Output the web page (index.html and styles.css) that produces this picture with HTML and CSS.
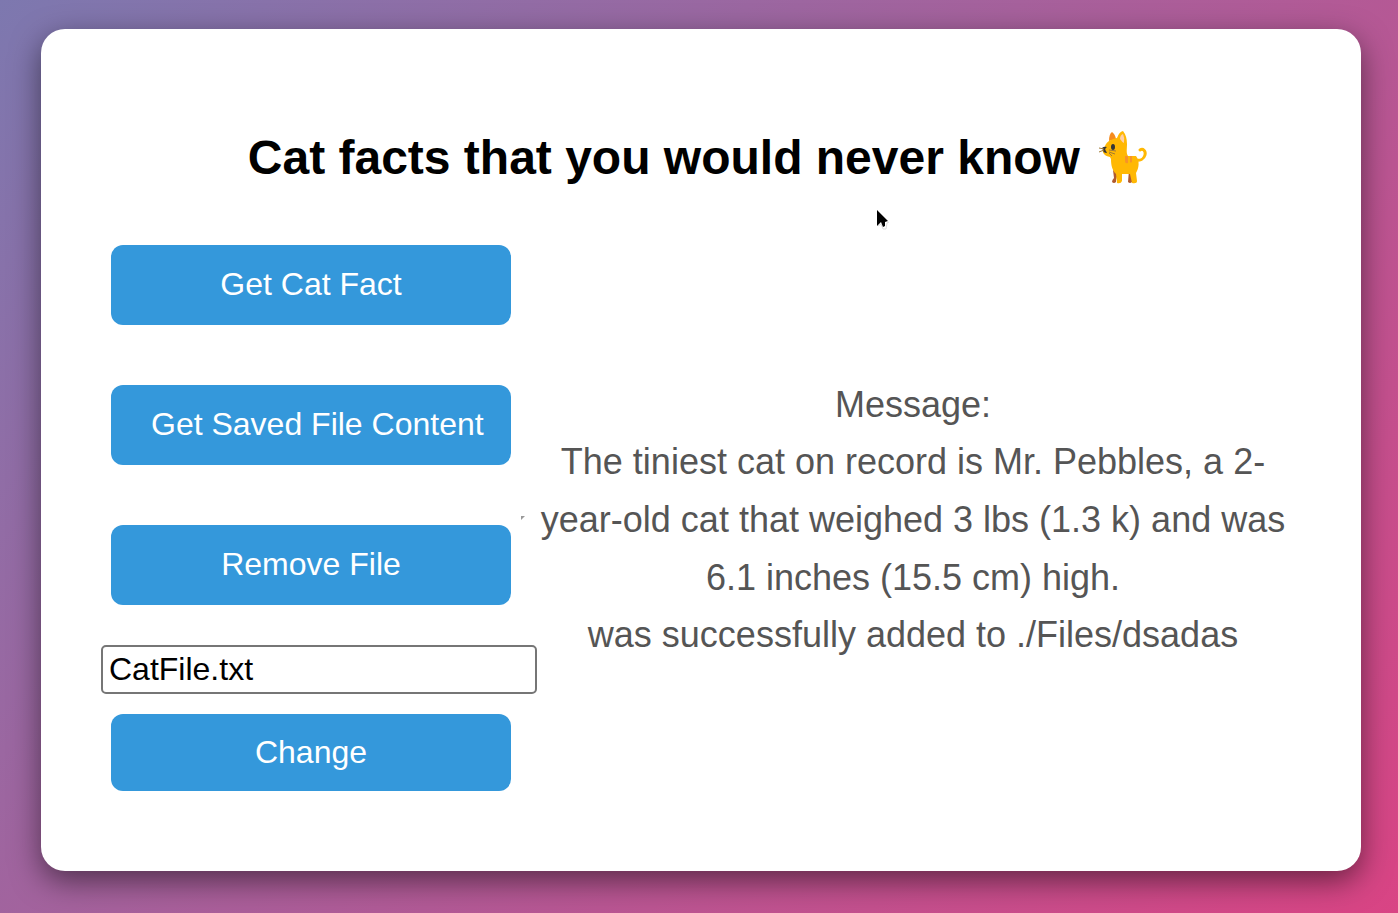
FILE: index.html
```html
<!DOCTYPE html>
<html lang="en">
<head>
<meta charset="utf-8">
<meta name="viewport" content="width=device-width, initial-scale=1">
<title>Cat facts</title>
<link rel="stylesheet" href="styles.css">
</head>
<body>
<main class="card">
  <h1 class="title">Cat facts that you would never know
    <svg class="cat" viewBox="0 0 70 75" role="img" aria-label="Cat">
      <path d="M46 40C51 41 55 39 56 35C57 31 54 28 51 30" fill="none" stroke="#ffb804" stroke-width="3" stroke-linecap="round"/>
      <path d="M24 50L29 53L27 60V62Q25 64 23 62Q23 60 25 58ZM40 50L43 54V62Q41 64 39 62Z" fill="#b05a2e"/>
      <path d="M20 21Q20 14 23 12Q26 14 27 19Z" fill="#f58b1e"/>
      <path d="M16 26C18 21 23 19 28 18Q30 12 34 11Q38 16 38 24C38 29 37 33 39 36L47 36C51 41 50 48 47 53L48 61Q48 64 43 63L41 54L33 54L33 61Q32 64 28 63L27 54C23 50 22 45 22 39L21 37C16 36 13 33 14 30Z" fill="#ffb804"/>
      <path d="M31 19Q31 15 34 14Q36 18 35 23Q33 22 31 19Z" fill="#ffcfa8"/>
      <path d="M36 36H39V43Q36 44 36 41ZM41 36H43V42Q41 44 41 41Z" fill="#f79329"/>
      <path d="M13 28Q15 26 18 27Q15 29 17 31L18 33Q14 33 14 30Z" fill="#343536"/>
      <ellipse cx="24" cy="27" rx="2" ry="3" fill="#343536"/>
      <path d="M15 29L10 28M15 30L10 32M20 32L26 34M20 30L27 31M20 33L23 36" fill="none" stroke="#a07a35"/>
    </svg>
  </h1>
  <div class="columns">
    <form class="controls">
      <button class="button" type="button">Get Cat Fact</button>
      <button class="button" type="button">Get Saved File Content</button>
      <button class="button" type="button">Remove File</button>
      <div class="file">
        <input class="file-name" type="text" value="CatFile.txt" aria-label="File name">
        <button class="button button-short" type="button">Change</button>
      </div>
    </form>
    <p class="message">Message:<br>The tiniest cat on record is Mr. Pebbles, a 2-year-old cat that weighed 3 lbs (1.3 k) and was 6.1 inches (15.5 cm) high.<br>was successfully added to ./Files/dsadas</p>
  </div>
</main>
<svg class="pointer" viewBox="0 0 16 24" aria-hidden="true">
  <path d="M3 18L6 16L8 21H11L12 15L14 14" fill="none" stroke="#ddd"/>
  <path d="M2 2V18L6 14L8 19L10 18V14L13 13Z" fill="#000"/>
</svg>
<svg class="handle" viewBox="0 0 4 4" aria-hidden="true"><path d="M0 0H4L0 4Z" fill="#999"/></svg>
</body>
</html>
```
FILE: styles.css
```css
* {
  box-sizing: border-box;
}

body {
  margin: 0;
  min-height: 100vh;
  display: flex;
  padding: 29px 37px 42px 41px;
  font-family: "Liberation Sans", Arial, sans-serif;
  background: linear-gradient(135deg, #7d78af, #d94484);
}

.card {
  flex: 1;
  padding: 100px 60px 70px;
  border-radius: 24px;
  background: #fff;
  box-shadow: 0 10px 30px rgba(0, 0, 0, 0.5);
}

.title {
  margin: 0 0 58px;
  font-size: 48px;
  line-height: 57px;
  text-align: center;
}

.cat {
  width: 70px;
  height: 75px;
  margin: -16px -5px -8px -4px;
  vertical-align: middle;
}

.columns {
  display: grid;
  grid-template-columns: 424px 1fr;
}

.controls {
  display: flex;
  flex-direction: column;
  align-items: flex-start;
  gap: 60px;
}

.button {
  width: 400px;
  height: 80px;
  margin-left: 10px;
  padding: 0 40px;
  border: 0;
  border-radius: 12px;
  background: #3498db;
  color: #fff;
  font: 32px "Liberation Sans", Arial, sans-serif;
  white-space: nowrap;
  cursor: pointer;
}

.button-short {
  height: 77px;
}

.file {
  display: flex;
  flex-direction: column;
  gap: 20px;
  margin-top: -20px;
}

.file-name {
  width: 436px;
  height: 49px;
  padding: 2px 6px;
  border: 2px solid #767676;
  border-radius: 5px;
  font: 32px "Liberation Sans", Arial, sans-serif;
  color: #000;
}

.message {
  align-self: center;
  margin: 0;
  padding-top: 4px;
  color: #555;
  font-size: 36px;
  line-height: 1.6;
  text-align: center;
}

.pointer {
  position: absolute;
  left: 875px;
  top: 208px;
  width: 16px;
  height: 24px;
}

.handle {
  position: absolute;
  left: 521px;
  top: 516px;
  width: 4px;
  height: 4px;
}
```
